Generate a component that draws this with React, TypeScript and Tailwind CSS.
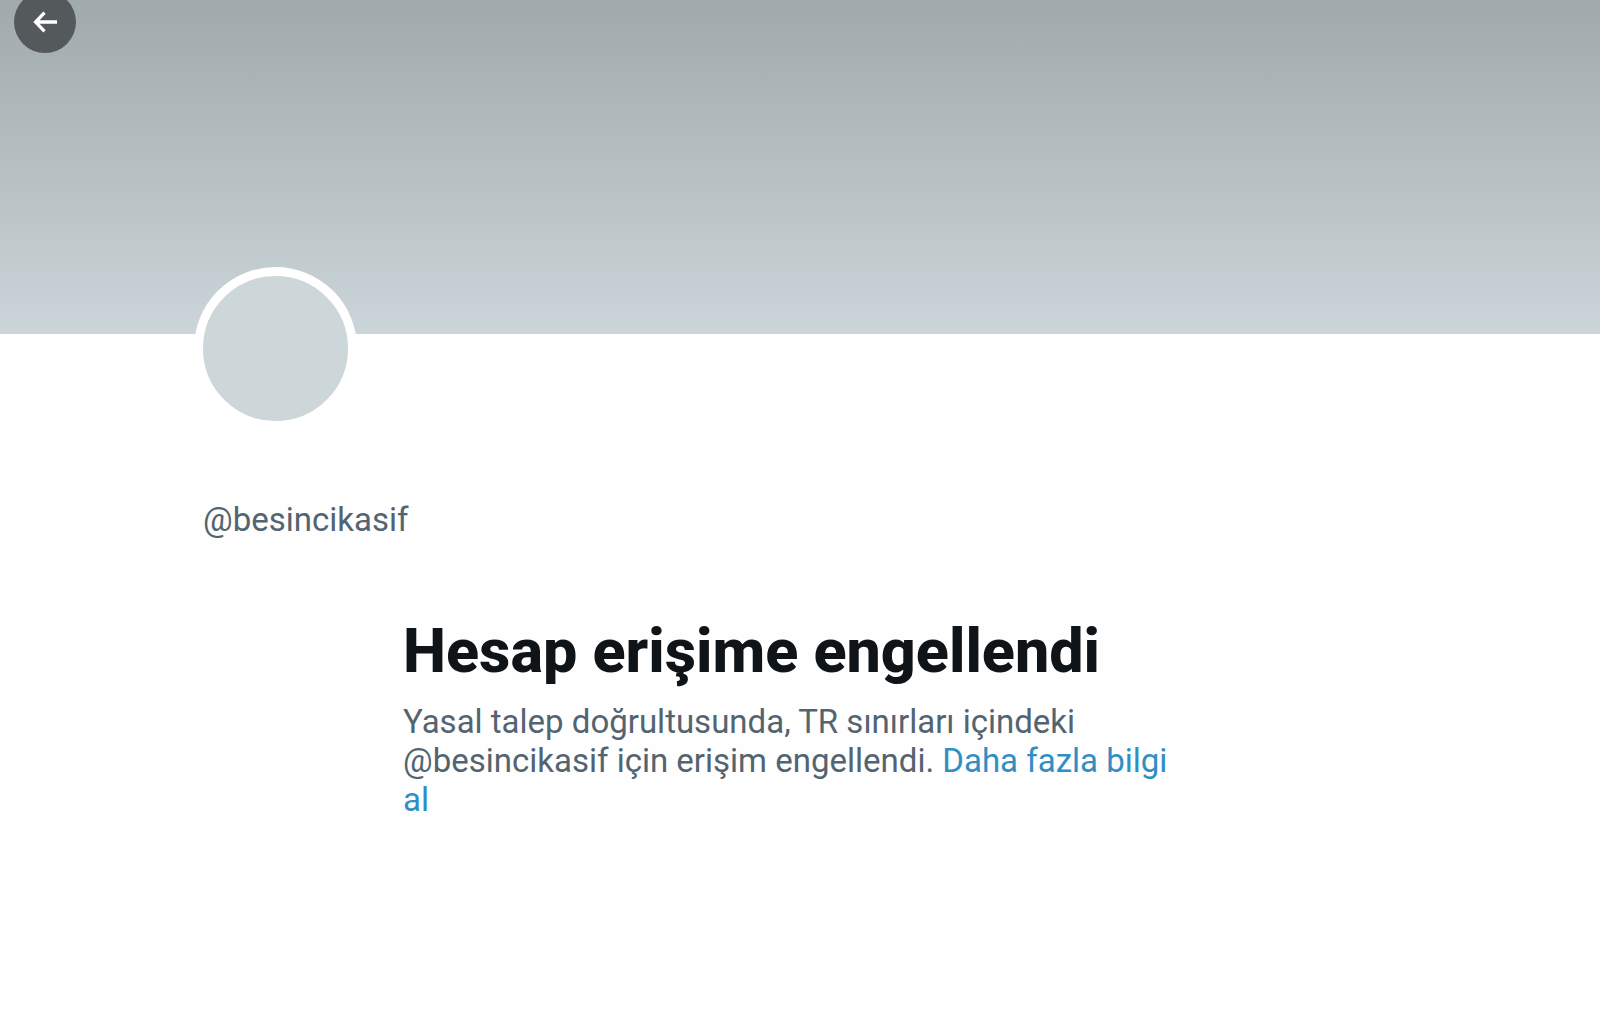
function BackArrow() {
  return (
    <svg viewBox="0 0 32 32" className="size-8" fill="none" stroke="currentColor" strokeWidth="3.300" aria-hidden="true">
      <path d="M28 16H7M15.500 6.700L6.600 16L15.500 25.300" />
    </svg>
  );
}

export default function App() {
  return (
    <main className="min-h-screen overflow-hidden bg-[#fefefe] font-[Roboto,sans-serif] text-[#536471]">
      <header className="flex h-[334px] items-start bg-linear-to-b from-[#a0a9ac] to-[#ccd6da] px-3.5">
        <button
          type="button"
          aria-label="Geri"
          className="-mt-[9px] flex size-[62px] items-center justify-center rounded-full bg-[#54595c] text-white"
        >
          <BackArrow />
        </button>
      </header>

      <section className="mx-auto max-w-[1194px]">
        <div className="relative -mt-[67px] -ml-[9px] size-[163px] rounded-full border-9 border-white bg-[#cdd7da]" />
        <p className="mt-[70px] text-[33px] leading-10">@besincikasif</p>

        <div className="mx-auto mt-[75px] max-w-[794px]">
          <h1 className="text-[61px] leading-[72px] font-extrabold text-[#0f1419]">Hesap erişime engellendi</h1>
          <p className="mt-[15px] max-w-[784px] text-[33px] leading-[39px]">
            Yasal talep doğrultusunda, TR sınırları içindeki @besincikasif için erişim engellendi.{" "}
            <a href="#" className="text-[#2f8fc4]">
              Daha fazla bilgi al
            </a>
          </p>
        </div>
      </section>
    </main>
  );
}
